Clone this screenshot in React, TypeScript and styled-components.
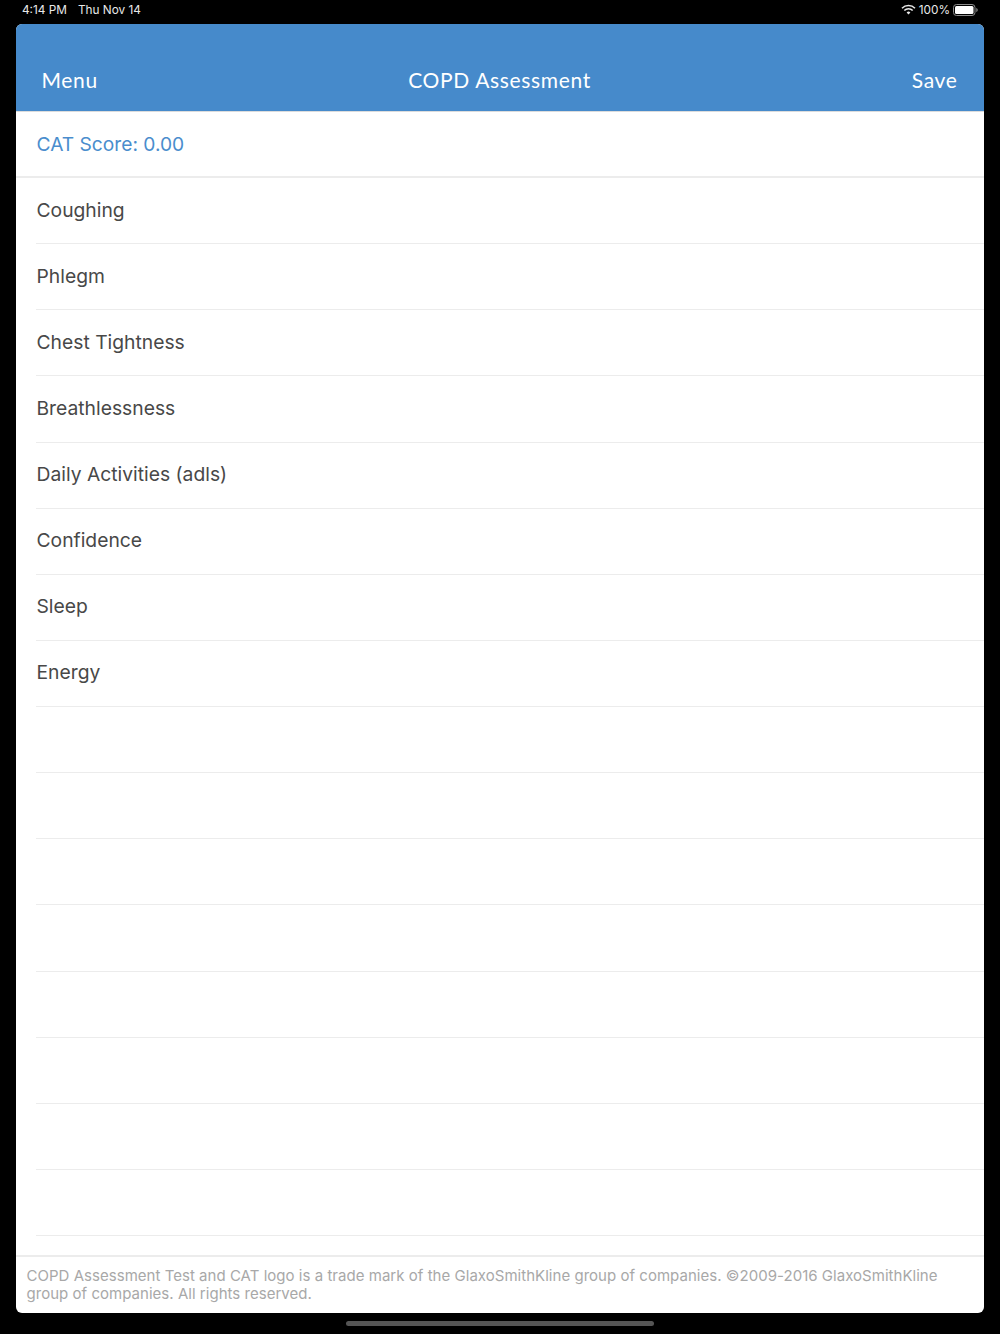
import styled, { createGlobalStyle } from 'styled-components';

const GlobalStyle = createGlobalStyle`
  html, body {
    margin: 0;
    padding: 0;
    background: #000;
  }
`;

const Screen = styled.div`
  width: 1000px;
  height: 1334px;
  background: #000;
  display: flex;
  flex-direction: column;
  overflow: hidden;
`;

const StatusBar = styled.div`
  height: 24px;
  padding: 0 22px 5px 22px;
  box-sizing: border-box;
  display: flex;
  align-items: center;
  justify-content: space-between;
  color: #e8e8e8;
  font: 400 11.8px 'Inter', sans-serif;
`;

const StatusLeft = styled.div`
  display: flex;
  gap: 11px;
`;

const StatusRight = styled.div`
  display: flex;
  align-items: center;
  gap: 3px;
`;

const Sheet = styled.div`
  margin: 0 16px;
  height: 1289px;
  background: #fff;
  border-radius: 6px;
  overflow: hidden;
  display: flex;
  flex-direction: column;
`;

const Header = styled.header`
  height: 87px;
  flex: none;
  box-sizing: border-box;
  padding: 43px 26.5px 0 25.5px;
  background: #468acb;
  color: #fff;
  font: 400 21px/26px 'Lato', sans-serif;
  letter-spacing: 0.65px;
  display: grid;
  grid-template-columns: 1fr auto 1fr;
`;

const HeaderSave = styled.span`
  justify-self: end;
`;

const ScoreRow = styled.div`
  height: 67px;
  flex: none;
  box-sizing: border-box;
  padding: 0 0 1px 20.5px;
  display: flex;
  align-items: center;
  color: #4a8dcd;
  font: 400 19.2px 'Inter', sans-serif;
  border-top: 1px solid #dcdcdc;
  border-bottom: 2px solid #ececec;
`;

const List = styled.div`
  flex: 1;
  display: grid;
  grid-auto-rows: 66.125px;
`;

const Row = styled.div`
  margin-left: 20px;
  padding: 0 0 2px 0.5px;
  display: flex;
  align-items: center;
  color: #484848;
  font: 400 19.3px 'Inter', sans-serif;
  border-bottom: 1px solid #ececec;
`;

const Footer = styled.footer`
  height: 58px;
  flex: none;
  box-sizing: border-box;
  padding: 10px 10.5px 0;
  border-top: 2px solid #ececec;
  color: #a8a8a8;
  font: 400 15px/17.5px 'Inter', sans-serif;
  letter-spacing: 0.03px;
`;

const HomeBar = styled.div`
  width: 308px;
  height: 5px;
  margin: 8px auto 0;
  border-radius: 3px;
  background: #555;
`;

const Battery = styled.svg`
  display: block;
`;

const rows = [
  'Coughing',
  'Phlegm',
  'Chest Tightness',
  'Breathlessness',
  'Daily Activities (adls)',
  'Confidence',
  'Sleep',
  'Energy',
  '',
  '',
  '',
  '',
  '',
  '',
  '',
  '',
];

export default function App() {
  return (
    <Screen>
      <GlobalStyle />
      <StatusBar>
        <StatusLeft>
          <span>4:14 PM</span>
          <span>Thu Nov 14</span>
        </StatusLeft>
        <StatusRight>
          <svg width="15" height="11" viewBox="0 0 15 11" fill="none" stroke="#e8e8e8" strokeWidth="1.6">
            <path d="M1 4.2a9.2 9.2 0 0 1 13 0" />
            <path d="M3.3 6.5a5.9 5.9 0 0 1 8.4 0" />
            <path d="M7.5 10.4 5.6 8.5a2.8 2.8 0 0 1 3.8 0z" fill="#e8e8e8" stroke="none" />
          </svg>
          <span>100%</span>
          <Battery width="25" height="12" viewBox="0 0 25 12">
            <rect x="0.5" y="0.5" width="21.5" height="11" rx="3" fill="none" stroke="#8c8c8c" />
            <rect x="2" y="2" width="18.5" height="8" rx="1.5" fill="#fff" />
            <path d="M23.3 4v4c.8-.3 1.4-1.1 1.4-2s-.6-1.7-1.4-2z" fill="#8c8c8c" />
          </Battery>
        </StatusRight>
      </StatusBar>
      <Sheet>
        <Header>
          <span>Menu</span>
          <span>COPD Assessment</span>
          <HeaderSave>Save</HeaderSave>
        </Header>
        <ScoreRow>CAT Score: 0.00</ScoreRow>
        <List>
          {rows.map((label, i) => (
            <Row key={i}>{label}</Row>
          ))}
        </List>
        <Footer>
          COPD Assessment Test and CAT logo is a trade mark of the GlaxoSmithKline group of companies. ©2009-2016
          GlaxoSmithKline group of companies. All rights reserved.
        </Footer>
      </Sheet>
      <HomeBar />
    </Screen>
  );
}
